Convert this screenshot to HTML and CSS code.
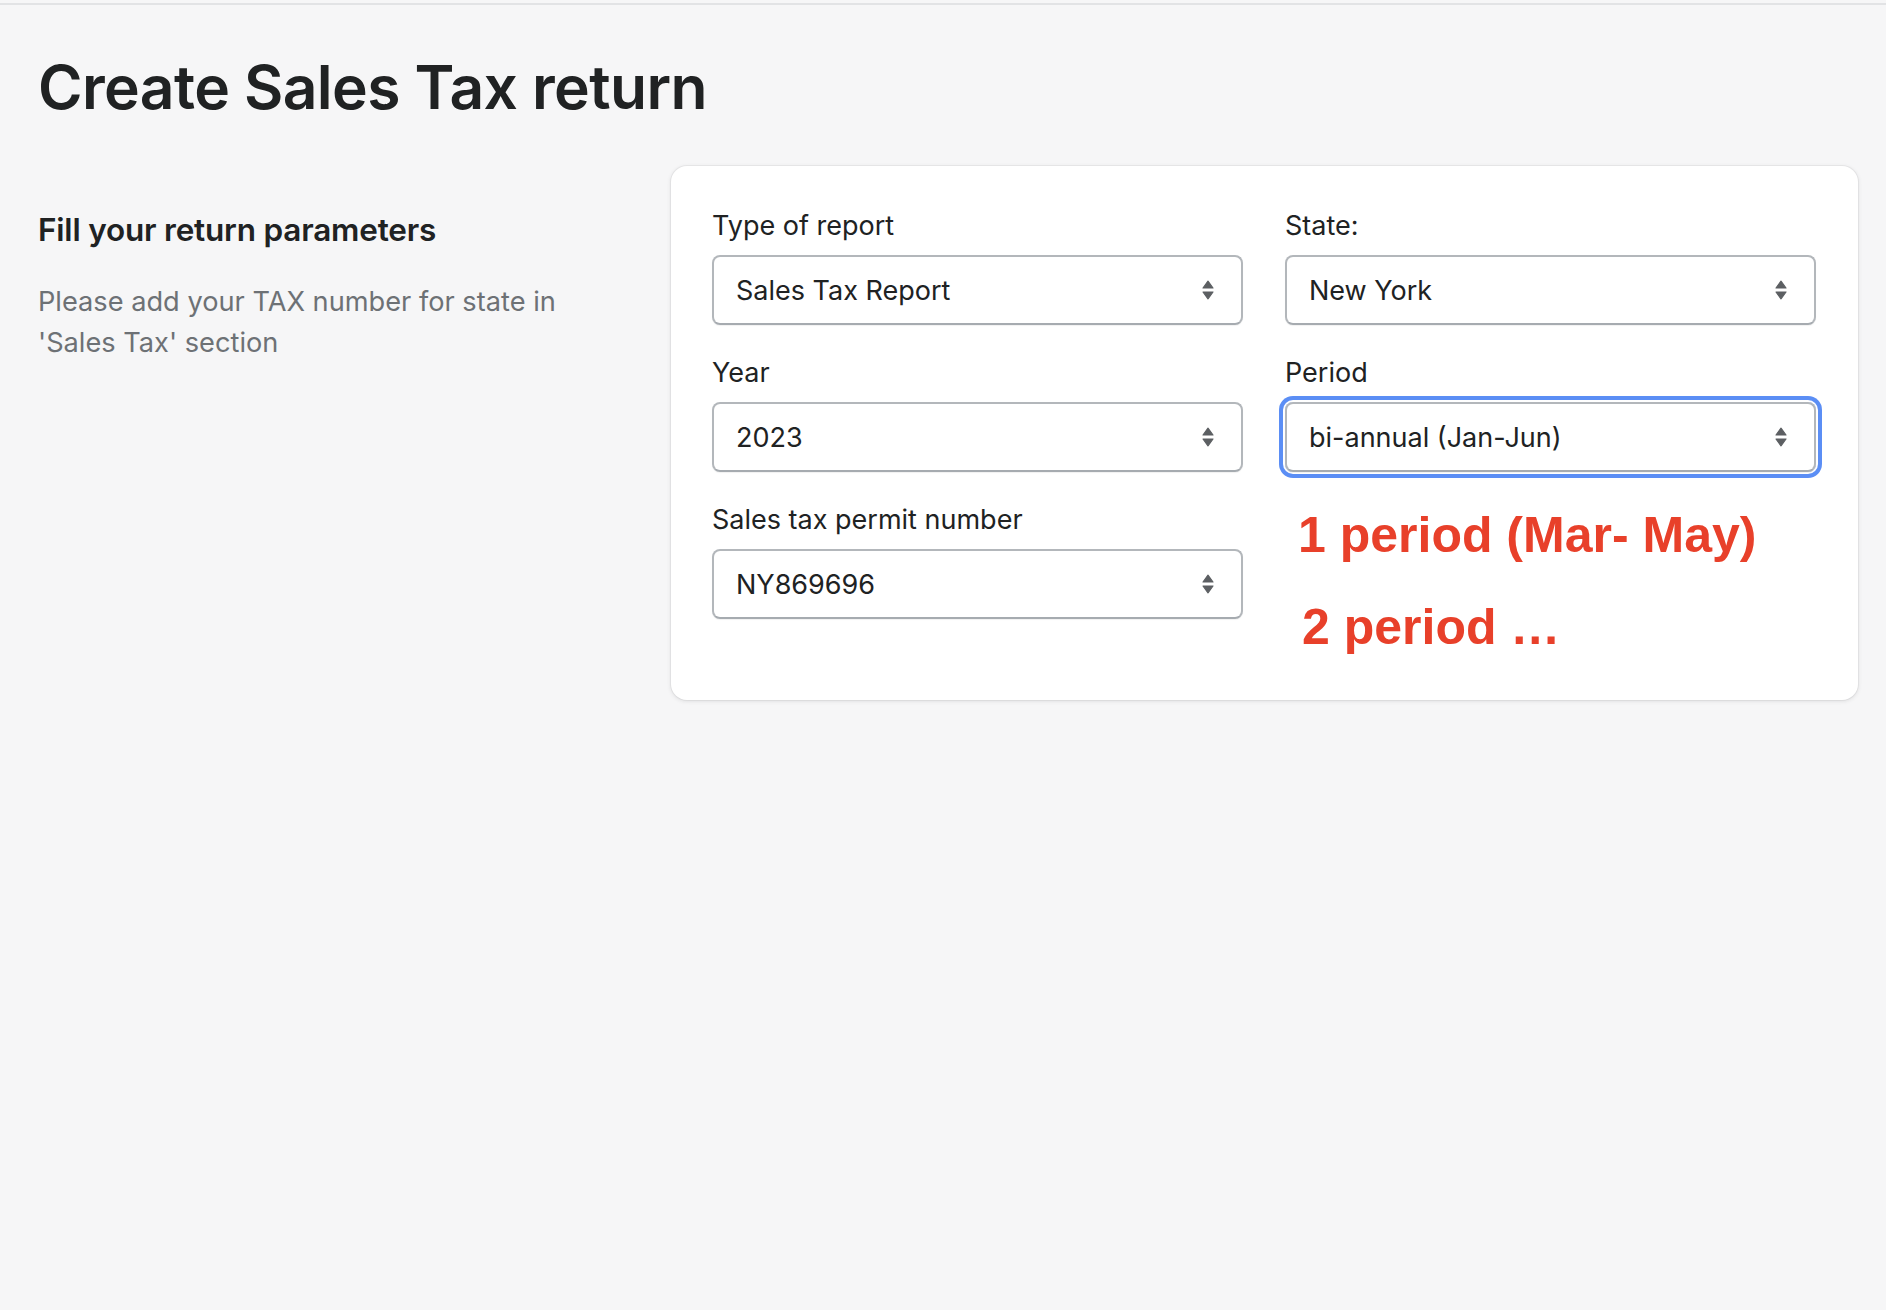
FILE: index.html
```html
<!DOCTYPE html>
<html lang="en">
<head>
<meta charset="utf-8">
<title>Create Sales Tax return</title>
<link rel="stylesheet" href="styles.css">
</head>
<body>
<div class="topbar"></div>
<main class="page">
  <h1 class="page-title">Create Sales Tax return</h1>
  <div class="layout">
    <section class="annotation">
      <h2 class="annotation-title">Fill your return parameters</h2>
      <p class="annotation-desc">Please add your TAX number for state in 'Sales Tax' section</p>
    </section>
    <section class="card">
      <div class="form-grid">
        <div class="field">
          <label class="field-label">Type of report</label>
          <div class="select-wrap">
            <div class="select">Sales Tax Report</div>
            <svg class="chev" viewBox="0 0 12 20" width="12" height="20"><path d="M6 1.2 L11 8 L1 8 Z" fill="#5c5f62" stroke="#5c5f62" stroke-width="1.2" stroke-linejoin="round"/><path d="M6 18.8 L11 12 L1 12 Z" fill="#5c5f62" stroke="#5c5f62" stroke-width="1.2" stroke-linejoin="round"/></svg>
          </div>
        </div>
        <div class="field">
          <label class="field-label">State:</label>
          <div class="select-wrap">
            <div class="select">New York</div>
            <svg class="chev" viewBox="0 0 12 20" width="12" height="20"><path d="M6 1.2 L11 8 L1 8 Z" fill="#5c5f62" stroke="#5c5f62" stroke-width="1.2" stroke-linejoin="round"/><path d="M6 18.8 L11 12 L1 12 Z" fill="#5c5f62" stroke="#5c5f62" stroke-width="1.2" stroke-linejoin="round"/></svg>
          </div>
        </div>
        <div class="field">
          <label class="field-label">Year</label>
          <div class="select-wrap">
            <div class="select">2023</div>
            <svg class="chev" viewBox="0 0 12 20" width="12" height="20"><path d="M6 1.2 L11 8 L1 8 Z" fill="#5c5f62" stroke="#5c5f62" stroke-width="1.2" stroke-linejoin="round"/><path d="M6 18.8 L11 12 L1 12 Z" fill="#5c5f62" stroke="#5c5f62" stroke-width="1.2" stroke-linejoin="round"/></svg>
          </div>
        </div>
        <div class="field">
          <label class="field-label">Period</label>
          <div class="select-wrap focused">
            <div class="select">bi-annual (Jan-Jun)</div>
            <svg class="chev" viewBox="0 0 12 20" width="12" height="20"><path d="M6 1.2 L11 8 L1 8 Z" fill="#5c5f62" stroke="#5c5f62" stroke-width="1.2" stroke-linejoin="round"/><path d="M6 18.8 L11 12 L1 12 Z" fill="#5c5f62" stroke="#5c5f62" stroke-width="1.2" stroke-linejoin="round"/></svg>
          </div>
        </div>
        <div class="field">
          <label class="field-label">Sales tax permit number</label>
          <div class="select-wrap">
            <div class="select">NY869696</div>
            <svg class="chev" viewBox="0 0 12 20" width="12" height="20"><path d="M6 1.2 L11 8 L1 8 Z" fill="#5c5f62" stroke="#5c5f62" stroke-width="1.2" stroke-linejoin="round"/><path d="M6 18.8 L11 12 L1 12 Z" fill="#5c5f62" stroke="#5c5f62" stroke-width="1.2" stroke-linejoin="round"/></svg>
          </div>
        </div>
        <div class="note">
          <p class="note-line">1 period (Mar- May)</p>
          <p class="note-line second">2 period …</p>
        </div>
      </div>
    </section>
  </div>
</main>
</body>
</html>
```

FILE: styles.css
```css
* { box-sizing: border-box; }

html, body {
  margin: 0;
  padding: 0;
  background: #f6f6f7;
}

body {
  font-family: Inter, "Noto Sans", "Liberation Sans", sans-serif;
  color: #202223;
  min-height: 1310px;
}

.topbar {
  height: 5px;
  background: #f6f6f7;
  border-bottom: 2px solid #e2e3e5;
}

.page {
  padding: 0 28px 0 38px;
}

.page-title {
  margin: 0;
  padding-top: 45px;
  font-size: 60.5px;
  line-height: 74px;
  font-weight: 600;
  letter-spacing: -0.6px;
  color: #202223;
}

.layout {
  display: grid;
  grid-template-columns: 590px 1fr;
  column-gap: 43px;
  margin-top: 42px;
  align-items: start;
}

.annotation {
  padding-top: 44px;
}

.annotation-title {
  margin: 0;
  font-size: 31.5px;
  line-height: 40px;
  font-weight: 600;
  letter-spacing: -0.2px;
  color: #202223;
}

.annotation-desc {
  margin: 31px 0 0;
  font-size: 27.2px;
  line-height: 41px;
  color: #6d7175;
}

.card {
  background: #ffffff;
  border-radius: 16px;
  box-shadow: 0 0 0 1px rgba(63, 63, 68, 0.05), 0 1px 4px rgba(63, 63, 68, 0.15);
  padding: 43px 42px 41px 41px;
}

.form-grid {
  display: grid;
  grid-template-columns: 1fr 1fr;
  column-gap: 42px;
  row-gap: 31px;
  align-items: start;
}

.field {
  display: flex;
  flex-direction: column;
  gap: 12px;
}

.field-label {
  font-size: 27px;
  line-height: 34px;
  color: #202223;
}

.select-wrap {
  position: relative;
  border-radius: 8px;
}

.select {
  height: 70px;
  display: flex;
  align-items: center;
  padding: 0 60px 0 22px;
  border: 2px solid #b3b7bb;
  border-bottom-color: #a6abb0;
  border-radius: 8px;
  background: #ffffff;
  font-size: 27px;
  color: #202223;
  box-shadow: 0 1px 1px rgba(0, 0, 0, 0.06);
}

.select-wrap.focused {
  box-shadow: 0 0 0 2px #ffffff, 0 0 0 6px #5b8ef5;
}

.chev {
  position: absolute;
  right: 29px;
  top: 25px;
}

.note {
  padding-left: 13px;
}

.note-line {
  margin: 0;
  font-family: "Liberation Sans", Arial, sans-serif;
  font-weight: 700;
  font-size: 50px;
  line-height: 64px;
  color: #e8402a;
}

.note-line.second {
  margin-top: 28px;
  padding-left: 4px;
}
```
